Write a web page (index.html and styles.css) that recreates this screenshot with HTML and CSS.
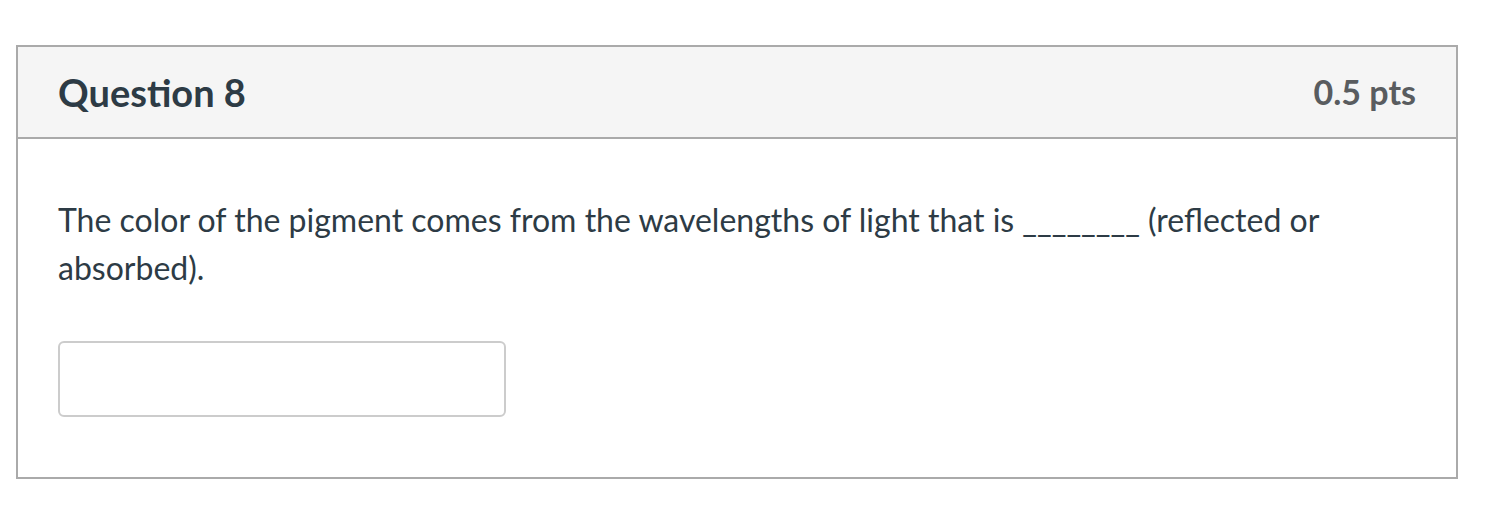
FILE: index.html
```html
<!DOCTYPE html>
<html>
<head>
<meta charset="utf-8">
<link rel="stylesheet" href="styles.css">
</head>
<body>
<div class="question">
  <div class="question-header">
    <h3 class="question-title">Question 8</h3>
    <div class="question-points">0.5 pts</div>
  </div>
  <div class="question-body">
    <p class="question-text">The color of the pigment comes from the wavelengths of light that is ________ (reflected or absorbed).</p>
    <input class="answer-input" type="text" aria-label="Answer">
  </div>
</div>
</body>
</html>
```
FILE: styles.css
```css
html, body {
  margin: 0;
  padding: 0;
  background: #ffffff;
}
body {
  padding: 45px 30px 0 16px;
  font-family: Lato, "Open Sans", sans-serif;
  color: #2d3b45;
}
.question {
  width: 1442px;
  box-sizing: border-box;
  border: 2px solid #aaaaaa;
}
.question-header {
  display: flex;
  justify-content: space-between;
  align-items: center;
  height: 90px;
  padding: 0 40px 0 40px;
  background: #f5f5f5;
  border-bottom: 2px solid #aaaaaa;
}
.question-title {
  margin: 0;
  font-size: 38px;
  line-height: 44px;
  font-weight: 700;
  color: #2d3b45;
}
.question-points {
  font-size: 34px;
  line-height: 44px;
  font-weight: 700;
  color: #595c5f;
}
.question-body {
  padding: 57px 40px 60px 40px;
}
.question-text {
  margin: 0 0 49px 0;
  font-size: 32px;
  line-height: 48px;
  color: #2d3b45;
  max-width: 1300px;
}
.answer-input {
  display: block;
  box-sizing: border-box;
  width: 448px;
  height: 76px;
  margin: 0;
  border: 2px solid #cccccc;
  border-radius: 6px;
  background: #fff;
  font-family: Lato, sans-serif;
  font-size: 30px;
}
```
